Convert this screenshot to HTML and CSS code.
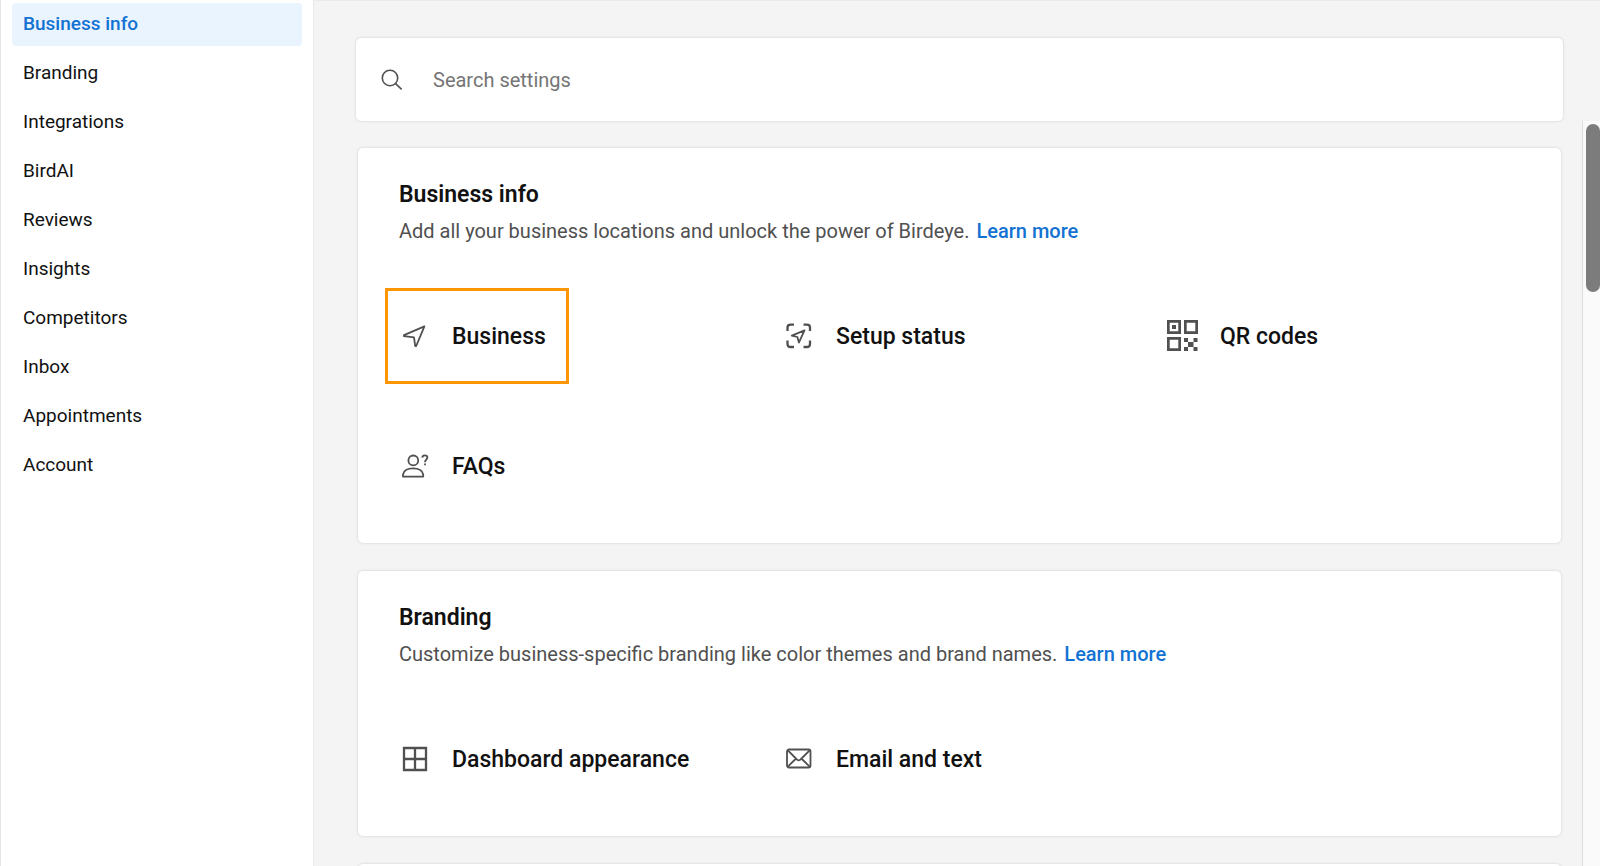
FILE: index.html
```html
<!DOCTYPE html>
<html lang="en">
<head>
<meta charset="utf-8">
<title>Settings</title>
<link rel="stylesheet" href="styles.css">
</head>
<body>
<div class="app">
  <nav class="sidebar" aria-label="Settings sections">
    <a class="nav-link active" href="#business-info">Business info</a>
    <a class="nav-link" href="#branding">Branding</a>
    <a class="nav-link" href="#integrations">Integrations</a>
    <a class="nav-link" href="#birdai">BirdAI</a>
    <a class="nav-link" href="#reviews">Reviews</a>
    <a class="nav-link" href="#insights">Insights</a>
    <a class="nav-link" href="#competitors">Competitors</a>
    <a class="nav-link" href="#inbox">Inbox</a>
    <a class="nav-link" href="#appointments">Appointments</a>
    <a class="nav-link" href="#account">Account</a>
  </nav>
  <main class="main">
    <div class="search-area">
      <label class="search">
        <svg class="search-icon" viewBox="0 0 24 24" aria-hidden="true"><circle cx="10" cy="10" r="7.7"/><path d="M15.6 15.6L21.6 21.4"/></svg>
        <input class="search-input" type="text" placeholder="Search settings" aria-label="Search settings">
      </label>
    </div>
    <div class="body">
      <div class="sections">
        <section class="card" id="business-info">
          <h2 class="card-title">Business info</h2>
          <p class="card-text">Add all your business locations and unlock the power of Birdeye. <a class="more" href="#learn-business">Learn more</a></p>
          <div class="tiles">
            <a class="tile highlighted" href="#business">
              <svg class="icon" viewBox="0 0 32 32" aria-hidden="true"><path d="M26.4 6.4L6 15.2V16.2L16 17.3L17.2 26H18.2Z"/></svg>
              <span>Business</span>
            </a>
            <a class="tile" href="#setup">
              <svg class="icon" viewBox="0 0 32 32" aria-hidden="true"><path class="heavy" d="M5.5 11V7.5Q5.5 4.6 8.5 4.6H12M21.5 4.6H25Q28 4.6 28 7.5V11M28 20.5V24Q28 27 25 27H21.5M12 27H8.5Q5.5 27 5.5 24V20.5"/><path d="M22.5 10.3L9.8 15.6L15.4 17L16.9 22.6Z"/></svg>
              <span>Setup status</span>
            </a>
            <a class="tile" href="#qr">
              <svg class="icon qr" viewBox="0 0 32 32" aria-hidden="true"><path fill-rule="evenodd" d="M1 0H15V14H1ZM3.7 2.7V11.3H12.3V2.7ZM6 5H10V9H6ZM18 0H32V14H18ZM20.7 2.7V11.3H29.3V2.7ZM1 17H15V31H1ZM3.7 19.7V28.3H12.3V19.7ZM18 18H22V22H18ZM27.5 18H31.5V22H27.5ZM22 22H27.5V27H22ZM18 27H22V31H18ZM27.5 27H31.5V31H27.5Z"/></svg>
              <span>QR codes</span>
            </a>
            <a class="tile" href="#faqs">
              <svg class="icon" viewBox="0 0 32 32" aria-hidden="true"><circle cx="15.3" cy="10.4" r="4.9"/><path d="M5 26.6V24.5C5.8 20.5 10 18.4 15 18.4S24.4 20.5 25.2 24.5V26.6Z"/><path d="M24.2 7.6C24.4 5.9 25.5 5.3 26.8 5.3C28.4 5.3 29.4 6.3 29.4 7.6C29.4 9.6 27 9.7 27 12.3M27 13.6V15.2"/></svg>
              <span>FAQs</span>
            </a>
          </div>
        </section>
        <section class="card" id="branding">
          <h2 class="card-title">Branding</h2>
          <p class="card-text">Customize business-specific branding like color themes and brand names. <a class="more" href="#learn-branding">Learn more</a></p>
          <div class="tiles">
            <a class="tile" href="#dashboard">
              <svg class="icon" viewBox="0 0 32 32" aria-hidden="true"><path class="heavy" d="M6 5H28V27H6ZM17 5V27M6 16H28"/></svg>
              <span>Dashboard appearance</span>
            </a>
            <a class="tile" href="#email">
              <svg class="icon" viewBox="0 0 32 32" aria-hidden="true"><rect x="5" y="6.5" width="23.5" height="18" rx="2"/><path d="M5.6 7.2L14.4 16Q16.7 18.8 19 16L27.9 7.2M5.6 23.8L13.6 16M27.9 23.8L19.8 16"/></svg>
              <span>Email and text</span>
            </a>
          </div>
        </section>
        <section class="card" id="integrations" aria-label="Integrations"></section>
      </div>
      <div class="track" aria-hidden="true"><div class="thumb"></div></div>
    </div>
  </main>
</div>
</body>
</html>
```
FILE: styles.css
```css
* {
  box-sizing: border-box;
}

body {
  margin: 0;
  font-family: Roboto, "Liberation Sans", sans-serif;
  color: #111;
  background: #f4f4f4;
}

a {
  color: inherit;
  text-decoration: none;
}

.app {
  display: flex;
  height: 100vh;
  overflow: hidden;
}

.sidebar {
  display: flex;
  flex-direction: column;
  gap: 6px;
  flex: 0 0 314px;
  padding: 3px 11px;
  background: #fff;
  border-left: 1px solid #e5e5e5;
  border-right: 1px solid #eaeaea;
}

.nav-link {
  padding: 0 11px 2px;
  border-radius: 4px;
  font-size: 19px;
  line-height: 41px;
}

.nav-link.active {
  color: #1272d3;
  background: #eaf4fe;
  font-weight: 500;
}

.main {
  display: flex;
  flex-direction: column;
  flex: 1;
  min-width: 0;
  border-top: 1px solid #eaeaea;
}

.search-area {
  padding: 37px 37px 0 42px;
}

.search {
  display: flex;
  align-items: center;
  gap: 29px;
  padding: 0 24px;
  height: 83px;
  border-radius: 5px;
  background: #fff;
  box-shadow: 0 0 3px rgba(0, 0, 0, 0.16);
}

.search-icon {
  width: 24px;
  height: 24px;
  fill: none;
  stroke: #505050;
  stroke-width: 1.6;
}

.search-input {
  flex: 1;
  padding: 0;
  border: 0;
  outline: 0;
  background: none;
  font: 20px/28px Roboto, "Liberation Sans", sans-serif;
  color: #111;
}

.search-input::placeholder {
  color: #757575;
}

.body {
  display: flex;
  flex: 1;
  min-height: 0;
}

.sections {
  display: flex;
  flex-direction: column;
  gap: 28px;
  flex: 1;
  overflow: hidden;
  padding: 27px 21px 0 44px;
}

.card {
  flex: none;
  min-height: 240px;
  padding: 33px 24px 29px 27px;
  border-radius: 5px;
  background: #fff;
  box-shadow: 0 0 3px rgba(0, 0, 0, 0.16);
}

.card-title {
  margin: 0 0 8px;
  padding-left: 14px;
  font-size: 23px;
  font-weight: 600;
  line-height: 28px;
}

.card-text {
  margin: 0 0 43px;
  padding-left: 14px;
  font-size: 20px;
  line-height: 28px;
  color: #505050;
}

.more {
  margin-left: 2px;
  color: #1272d3;
  font-weight: 500;
}

.tiles {
  display: grid;
  grid-template-columns: repeat(3, 1fr);
  row-gap: 34px;
}

.tile {
  display: flex;
  align-items: center;
  justify-self: start;
  gap: 22px;
  height: 96px;
  padding: 0 20px 0 10px;
  border: 3px solid transparent;
  font-size: 23px;
  font-weight: 500;
}

.tile.highlighted {
  border-color: #ff9500;
}

.icon {
  flex: none;
  width: 32px;
  height: 32px;
  fill: none;
  stroke: #505050;
  stroke-width: 1.8;
  stroke-linejoin: round;
}

.icon .heavy {
  stroke-width: 2.3;
  stroke-linejoin: miter;
}

.icon.qr {
  fill: #505050;
  stroke: none;
}

.track {
  flex: 0 0 18px;
  padding: 3px 0 0 3px;
  border-left: 1px solid #dedede;
  background: #fafafa;
}

.thumb {
  height: 168px;
  border-radius: 7px;
  background: #7c7c7c;
}
```
